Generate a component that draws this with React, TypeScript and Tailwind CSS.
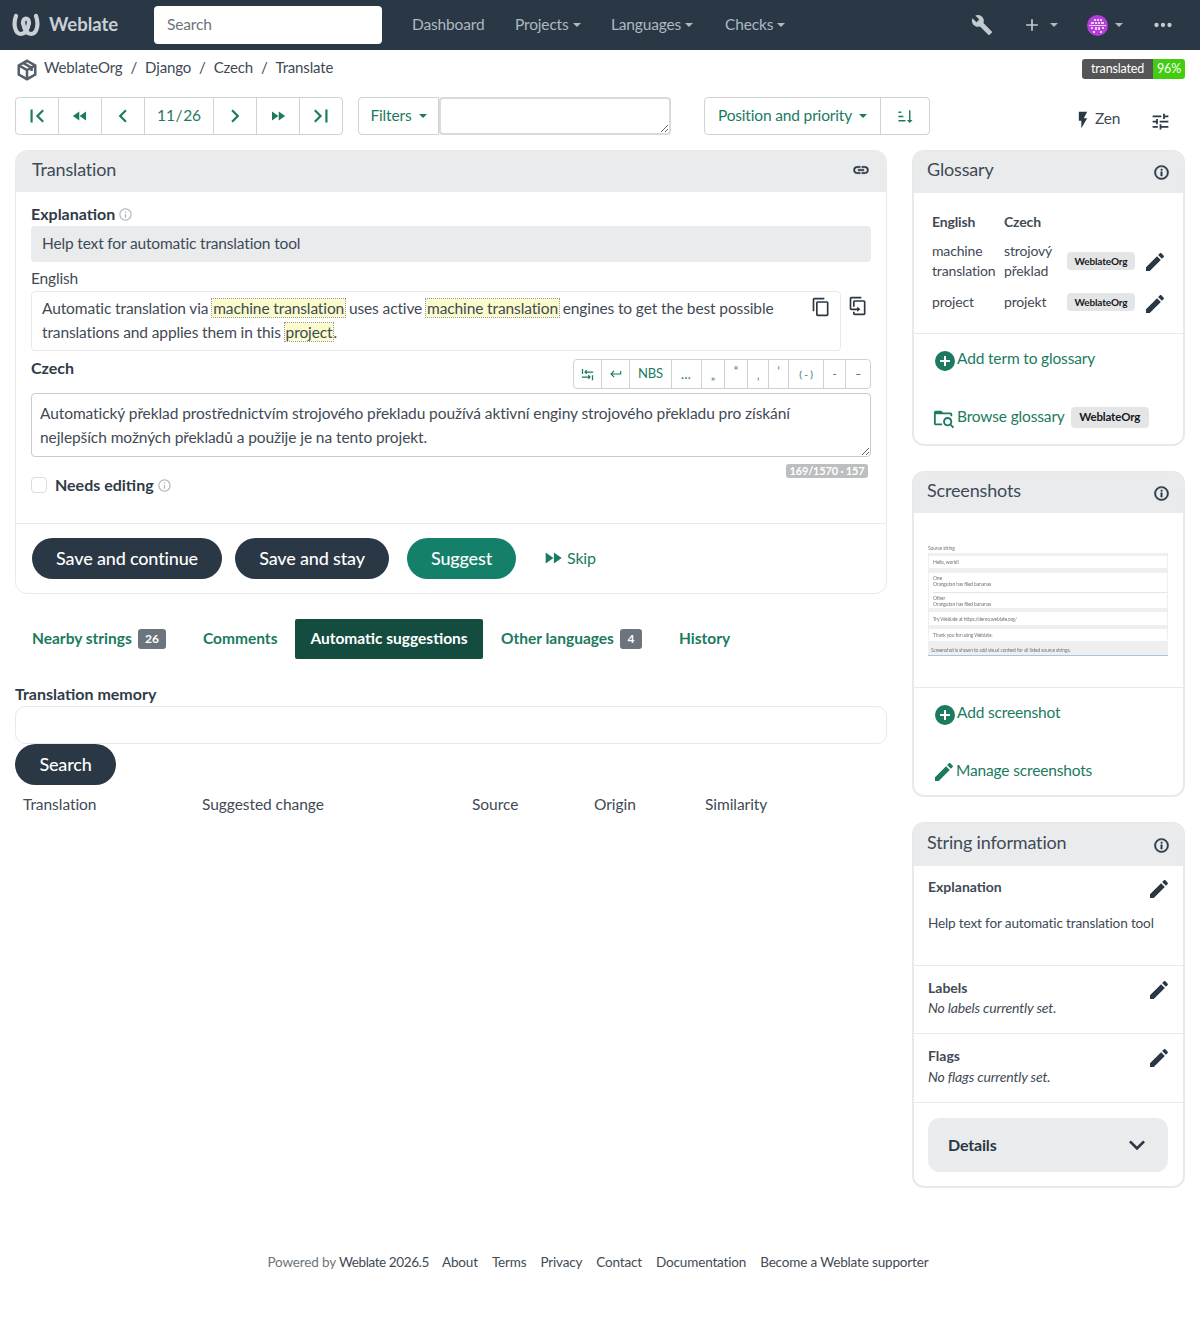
import type { ReactNode } from 'react';

const P = {
  pencil: 'M20.71,7.04C21.1,6.65 21.1,6 20.71,5.63L18.37,3.29C18,2.9 17.35,2.9 16.96,3.29L15.12,5.12L18.87,8.87M3,17.25V21H6.75L17.81,9.93L14.06,6.18L3,17.25Z',
  info: 'M11,9H13V7H11M12,20C7.59,20 4,16.41 4,12C4,7.59 7.59,4 12,4C16.41,4 20,7.59 20,12C20,16.41 16.41,20 12,20M12,2A10,10 0 0,0 2,12A10,10 0 0,0 12,22A10,10 0 0,0 22,12A10,10 0 0,0 12,2M11,17H13V11H11V17Z',
  plusCircle: 'M17,13H13V17H11V13H7V11H11V7H13V11H17M12,2A10,10 0 0,0 2,12A10,10 0 0,0 12,22A10,10 0 0,0 22,12A10,10 0 0,0 12,2Z',
  wrench: 'M22.7,19L13.6,9.9C14.5,7.6 14,4.9 12.1,3C10.1,1 7.1,0.6 4.7,1.7L9,6L6,9L1.6,4.7C0.4,7.1 0.9,10.1 2.9,12.1C4.8,14 7.5,14.5 9.8,13.6L18.9,22.7C19.3,23.1 19.9,23.1 20.3,22.7L22.6,20.4C23.1,20 23.1,19.3 22.7,19Z',
  copy: 'M19,21H8V7H19M19,5H8A2,2 0 0,0 6,7V21A2,2 0 0,0 8,23H19A2,2 0 0,0 21,21V7A2,2 0 0,0 19,5M16,1H4A2,2 0 0,0 2,3V17H4V3H16V1Z',
  duplicate: 'M11,17H4A2,2 0 0,1 2,15V3A2,2 0 0,1 4,1H16V3H4V15H11V13L15,16L11,19V17M19,21V7H8V13H6V7A2,2 0 0,1 8,5H19A2,2 0 0,1 21,7V21A2,2 0 0,1 19,23H8A2,2 0 0,1 6,21V19H8V21H19Z',
  first: 'M18.41,16.59L13.82,12L18.41,7.41L17,6L11,12L17,18L18.41,16.59M6,6H8V18H6V6Z',
  last: 'M5.59,7.41L10.18,12L5.59,16.59L7,18L13,12L7,6L5.59,7.41M16,6H18V18H16V6Z',
  left: 'M15.41,16.58L10.83,12L15.41,7.41L14,6L8,12L14,18L15.41,16.58Z',
  right: 'M8.59,16.58L13.17,12L8.59,7.41L10,6L16,12L10,18L8.59,16.58Z',
  rewind: 'M11.5,12L20,18V6M11,18V6L2.5,12L11,18Z',
  forward: 'M13,6V18L21.5,12M4,18L12.5,12L4,6V18Z',
  down: 'M7.41,8.58L12,13.17L16.59,8.58L18,10L12,16L6,10L7.41,8.58Z',
  plus: 'M19,13H13V19H11V13H5V11H11V5H13V11H19V13Z',
  dots: 'M16,12A2,2 0 0,1 18,10A2,2 0 0,1 20,12A2,2 0 0,1 18,14A2,2 0 0,1 16,12M10,12A2,2 0 0,1 12,10A2,2 0 0,1 14,12A2,2 0 0,1 12,14A2,2 0 0,1 10,12M4,12A2,2 0 0,1 6,10A2,2 0 0,1 8,12A2,2 0 0,1 6,14A2,2 0 0,1 4,12Z',
  flash: 'M7,2V13H10V22L17,10H13L17,2H7Z',
  tune: 'M3,17V19H9V17H3M3,5V7H13V5H3M13,21V19H21V17H13V15H11V21H13M7,9V11H3V13H7V15H9V9H7M21,13V11H11V13H21M15,9H17V7H21V5H17V3H15V9Z',
  link: 'M3.9,12C3.9,10.29 5.29,8.9 7,8.9H11V7H7A5,5 0 0,0 2,12A5,5 0 0,0 7,17H11V15.1H7C5.29,15.1 3.9,13.71 3.9,12M8,13H16V11H8V13M17,7H13V8.9H17C18.71,8.9 20.1,10.29 20.1,12C20.1,13.71 18.71,15.1 17,15.1H13V17H17A5,5 0 0,0 22,12A5,5 0 0,0 17,7Z',
  sort: 'M19 17H22L18 21L14 17H17V3H19M2 17H12V19H2M6 5V7H2V5M2 11H9V13H2V11Z',
  ret: 'M19,7V11H5.83L9.41,7.41L8,6L2,12L8,18L9.41,16.58L5.83,13H21V7H19Z',
  tabs: 'M3 3H5V11H3V3M7 7.500L10 4.500L11.400 5.900L10.300 7H21V9H10.300L11.400 10.100L10 11.500L7 8.500V7.500M19 13H21V21H19V13M17 16.500L14 19.500L12.600 18.100L13.700 17H3V15H13.700L12.600 13.900L14 12.500L17 15.500V16.500Z',
  folderSearch: 'M9 4H3C1.900 4 1 4.900 1 6V18C1 19.100 1.900 20 3 20H10V18H3V8H19V10H21V8C21 6.900 20.100 6 19 6H11L9 4ZM16 11C13.200 11 11 13.200 11 16C11 18.800 13.200 21 16 21C17 21 17.900 20.700 18.700 20.200L21.600 23.100L23 21.700L20.100 18.800C20.700 18 21 17 21 16C21 13.200 18.800 11 16 11ZM16 13C17.700 13 19 14.300 19 16C19 17.700 17.700 19 16 19C14.300 19 13 17.700 13 16C13 14.300 14.300 13 16 13Z',
};

function Icon({ d, className }: { d: string; className?: string }) {
  return (
    <svg viewBox="0 0 24 24" fill="currentColor" className={className}>
      <path d={d} />
    </svg>
  );
}

function Caret({ className }: { className?: string }) {
  return <span className={`inline-block w-0 h-0 border-x-[4px] border-x-transparent border-t-[4px] ${className ?? 'border-t-current'}`} />;
}

function NavItem({ label, caret, className }: { label: string; caret?: boolean; className: string }) {
  return (
    <span className={`flex items-center gap-[4px] text-[#aeb9c3] ${className}`}>
      {label}
      {caret && <Caret />}
    </span>
  );
}

function PagerButton({ w, children, last }: { w: string; children: ReactNode; last?: boolean }) {
  return (
    <span className={`flex items-center justify-center h-full text-[#1b7a60] ${w} ${last ? '' : 'border-r border-[#cfd2d5]'}`}>
      {children}
    </span>
  );
}

function CharButton({ w, label, last, className }: { w: string; label: ReactNode; last?: boolean; className?: string }) {
  return (
    <span className={`flex items-center justify-center h-full text-[#1b7a60] ${w} ${last ? '' : 'border-r border-[#cfd2d5]'} ${className ?? 'text-[13px]'}`}>
      {label}
    </span>
  );
}

function Panel({ title, h, className, children }: { title: string; h: string; className?: string; children: ReactNode }) {
  return (
    <section className={`rounded-[12px] border-2 border-[#e8e9eb] overflow-hidden bg-white ${className ?? ''}`}>
      <div className={`flex items-center justify-between bg-[#e9ebed] pl-[13px] pr-[13px] ${h}`}>
        <span className="text-[18px] text-[#3f4a55] pb-[6px]">{title}</span>
        <Icon d={P.info} className="w-[17px] h-[17px] text-[#2a3744] stroke-current stroke-[0.7]" />
      </div>
      {children}
    </section>
  );
}

function Hl({ children }: { children: ReactNode }) {
  return <span className="bg-[#fbfbcc] px-[1px] outline-1 outline-dotted outline-[#9a9a80]">{children}</span>;
}

function OrgTag({ big, className }: { big?: boolean; className?: string }) {
  return big ? (
    <span className="rounded-[4px] bg-[#e4e5e7] w-[78px] h-[21px] flex items-center justify-center text-[11.5px] font-bold text-[#16191c]">WeblateOrg</span>
  ) : (
    <span className={`rounded-[4px] bg-[#e4e5e7] h-[18px] w-[68px] flex items-center justify-center text-[10px] font-bold text-[#16191c] ${className ?? ''}`}>WeblateOrg</span>
  );
}

function Thumb() {
  return (
    <div className="w-[240px] h-[111px] text-[5px] leading-[6px] text-[#777] flex flex-col blur-[0.3px]">
      <div className="h-[8px]">Source string</div>
      <div className="flex-1 bg-[#efefef] border-b border-[#a9c4dc] pt-[3px] px-[1px] flex flex-col">
        <div className="h-[12px] bg-white pl-[4px] flex items-center">Hello, world!</div>
        <div className="h-[35px] mt-[5px] bg-white pl-[4px] flex flex-col justify-center gap-[5px]">
          <span>One<br />Orangutan has filed bananas</span>
          <span className="border-t border-[#e5e5e5] pt-[2px]">Other<br />Orangutan has filed bananas</span>
        </div>
        <div className="h-[13px] mt-[4px] bg-white pl-[4px] flex items-center">Try Weblate at https://demo.weblate.org/</div>
        <div className="h-[12px] mt-[4px] bg-white pl-[4px] flex items-center">Thank you for using Weblate.</div>
        <div className="pl-[2px] mt-[6px]">Screenshot is shown to add visual context for all listed source strings.</div>
      </div>
    </div>
  );
}

function InfoRow({ title, body, className, bodyClass }: { title: string; body: string; className: string; bodyClass: string }) {
  return (
    <div className={`border-b border-[#e8e9eb] pl-[14px] pr-[12px] ${className}`}>
      <div className="flex items-start justify-between">
        <span className="text-[14px] font-bold text-[#3f4a55] tracking-normal -mt-[1px]">{title}</span>
        <Icon d={P.pencil} className="w-[24px] h-[24px] text-[#2a3744]" />
      </div>
      <p className={`text-[#3f4a55] ${bodyClass}`}>{body}</p>
    </div>
  );
}

export default function App() {
  return (
    <div className="w-[1200px] h-[1321px] bg-white font-[Lato,sans-serif] text-[#3f4a55] text-[15.5px] tracking-[-0.16px] overflow-hidden">
      {/* Navbar */}
      <header className="h-[50px] bg-[#2a3744] flex items-center">
        <svg viewBox="0 0 28 24" className="ml-[12px] w-[28px] h-[24px]" fill="none" stroke="#c9d0d6" strokeWidth="4.200" strokeLinecap="round">
          <path d="M4 3C1 11 3 21 9 21C14 21 16 15 17 10" />
          <path d="M24 3C27 11 25 21 19 21C14 21 12 15 11 10" />
          <path d="M11 10C11 4 17 4 17 10" />
        </svg>
        <span className="ml-[9px] w-[105px] text-[18.5px] font-bold text-[#c9d0d6] tracking-normal">Weblate</span>
        <div className="w-[228px] h-[38px] bg-white rounded-[4px] flex items-center pl-[13px] text-[#6b747c] -mt-[1px]">Search</div>
        <NavItem label="Dashboard" className="ml-[30px] w-[103px]" />
        <NavItem label="Projects" caret className="w-[96px]" />
        <NavItem label="Languages" caret className="w-[114px]" />
        <NavItem label="Checks" caret className="w-[178px]" />
        <Icon d={P.wrench} className="w-[22px] h-[22px] text-[#c3cad0] ml-[68px]" />
        <Icon d={P.plus} className="w-[20px] h-[20px] text-[#c3cad0] ml-[29px]" />
        <Caret className="border-t-[#aeb9c3] ml-[8px]" />
        <svg viewBox="0 0 21 21" className="w-[21px] h-[21px] ml-[29px]">
          <circle cx="10.500" cy="10.500" r="10.500" fill="#b23fd9" />
          <path d="M7 4h2v2H7zM10 4h2v2h-2zM13 4h2v2h-2zM4 7h3v2H4zM8 7h2v2H8zM11 7h2v2h-2zM14 7h3v2h-3zM2 10h17v1H2zM4 12h2v2H4zM8 12h2v3H8zM11 12h2v3h-2zM15 12h2v2h-2zM6 16h2v2H6zM13 16h2v2h-2z" fill="#f3cdfb" />
        </svg>
        <Caret className="border-t-[#aeb9c3] ml-[7px]" />
        <Icon d={P.dots} className="w-[26px] h-[26px] text-[#c3cad0] ml-[27px]" />
      </header>

      {/* Breadcrumb */}
      <div className="h-[47px] flex items-start">
        <svg viewBox="0 0 24 24" className="w-[22px] h-[24px] ml-[16px] mt-[8px]" fill="none" stroke="#55606a" strokeWidth="2.800">
          <path d="M12 2L21 7V17L12 22L3 17V7Z" />
          <path d="M3 7L12 12L21 7M12 12V22M8 4.500L17 9.500V13" />
        </svg>
        <nav className="ml-[6px] mt-[7px] flex gap-[8px] text-[15px] text-[#3f4a55] leading-[20px]">
          <span>WeblateOrg</span><span>/</span><span>Django</span><span>/</span><span>Czech</span><span>/</span><span>Translate</span>
        </nav>
        <div className="ml-auto mr-[15px] mt-[9px] flex h-[20px] text-[12.5px] text-white rounded-[3px] overflow-hidden">
          <span className="bg-[#555] w-[71px] flex items-center justify-center">translated</span>
          <span className="bg-[#4c1] w-[32px] flex items-center justify-center">96%</span>
        </div>
      </div>

      {/* Toolbar */}
      <div className="h-[38px] flex items-stretch pl-[15px]">
        <div className="flex h-full w-[328px] rounded-[4px] border border-[#cfd2d5]">
          <PagerButton w="w-[43px]"><Icon d={P.first} className="w-[26px] h-[26px]" /></PagerButton>
          <PagerButton w="w-[43px]"><Icon d={P.rewind} className="w-[18px] h-[18px]" /></PagerButton>
          <PagerButton w="w-[43px]"><Icon d={P.left} className="w-[26px] h-[26px]" /></PagerButton>
          <PagerButton w="w-[69px]"><span className="[word-spacing:-3px] -mt-[1px]">11 / 26</span></PagerButton>
          <PagerButton w="w-[43px]"><Icon d={P.right} className="w-[26px] h-[26px]" /></PagerButton>
          <PagerButton w="w-[43px]"><Icon d={P.forward} className="w-[18px] h-[18px]" /></PagerButton>
          <PagerButton w="flex-1" last><Icon d={P.last} className="w-[26px] h-[26px]" /></PagerButton>
        </div>
        <div className="ml-[15px] w-[81px] rounded-l-[4px] border border-[#cfd2d5] flex items-center justify-center gap-[7px] text-[#1b7a60]">
          <span className="-mt-[1px]">Filters</span> <Caret />
        </div>
        <textarea className="w-[232px] h-[38px] rounded-[4px] border-2 border-[#d8dadc] outline-none" readOnly aria-label="Query" />
        <div className="ml-[33px] w-[226px] flex rounded-[4px] border border-[#cfd2d5] text-[#1b7a60]">
          <span className="w-[176px] border-r border-[#cfd2d5] flex items-center justify-center gap-[7px]"><span className="-mt-[1px]">Position and priority</span> <Caret /></span>
          <span className="flex-1 flex items-center justify-center"><Icon d={P.sort} className="w-[17px] h-[17px]" /></span>
        </div>
        <div className="ml-[143px] mt-[9px] flex items-start text-[#3f4a55]">
          <Icon d={P.flash} className="w-[20px] h-[20px] mt-[4px] text-[#2a3744]" />
          <span className="ml-[2px] mt-[1px]">Zen</span>
          <Icon d={P.tune} className="w-[21px] h-[21px] ml-[30px] mt-[5px] text-[#2a3744]" />
        </div>
      </div>

      {/* Main columns */}
      <div className="flex pl-[15px] pr-[15px] pt-[15px] gap-[25px]">
        <main className="w-[872px]">
          <section className="h-[444px] rounded-[12px] border border-[#e8e9eb] overflow-hidden">
            <div className="h-[41px] bg-[#e9ebed] flex items-center justify-between pl-[16px] pr-[16px]">
              <span className="text-[18px] text-[#3f4a55] pb-[4px]">Translation</span>
              <Icon d={P.link} className="w-[18px] h-[18px] text-[#2a3744] stroke-current stroke-[0.5] -mt-[4px]" />
            </div>
            <div className="px-[15px] pt-[12px]">
              <div className="flex items-center h-[20px] text-[16px] tracking-normal font-bold text-[#2f3b47]">
                Explanation
                <Icon d={P.info} className="w-[15px] h-[15px] ml-[3px] text-[#b4b8bc]" />
              </div>
              <div className="mt-[2px] h-[36px] bg-[#e9ebed] rounded-[4px] flex items-center pl-[11px] text-[#3f4a55]">Help text for automatic translation tool</div>
              <div className="mt-[5px] h-[22px] leading-[22px]">English</div>
              <div className="flex mt-[2px]">
                <div className="w-[810px] h-[60px] rounded-[4px] border border-[#e8e9eb] pl-[10px] pt-[4px] flex justify-between">
                  <p className="w-[750px] leading-[24px] tracking-[-0.12px]">
                    Automatic translation via <Hl>machine translation</Hl> uses active <Hl>machine translation</Hl> engines to get the best possible translations and applies them in this <Hl>project</Hl>.
                  </p>
                  <Icon d={P.copy} className="w-[20px] h-[20px] mr-[9px] mt-[1px] text-[#2a3744]" />
                </div>
                <Icon d={P.duplicate} className="w-[20px] h-[20px] ml-[7px] mt-[5px] text-[#2a3744]" />
              </div>
              <div className="flex justify-between items-start mt-[8px]">
                <span className="font-bold text-[16px] tracking-normal text-[#2f3b47] -mt-[3px]">Czech</span>
                <div className="flex h-[30px] rounded-[4px] border border-[#cfd2d5]">
                  <CharButton w="w-[28px]" label={<Icon d={P.tabs} className="w-[15px] h-[15px]" />} />
                  <CharButton w="w-[28px]" label={<Icon d={P.ret} className="w-[14px] h-[14px]" />} />
                  <CharButton w="w-[42px]" label="NBS" />
                  <CharButton w="w-[30px]" label="…" className="text-[13px] tracking-[1px] pt-[2px]" />
                  <CharButton w="w-[23px]" label="„" className="text-[11px] pt-[2px]" />
                  <CharButton w="w-[23px]" label="“" className="text-[11px] pb-[6px]" />
                  <CharButton w="w-[21px]" label="‚" className="text-[11px] pt-[2px]" />
                  <CharButton w="w-[20px]" label="‘" className="text-[11px] pb-[6px]" />
                  <CharButton w="w-[35px]" label="( - )" className="text-[10px] whitespace-pre" />
                  <CharButton w="w-[22px]" label="-" className="text-[11px]" />
                  <CharButton w="w-[24px]" label="–" className="text-[11px]" last />
                </div>
              </div>
              <textarea
                readOnly
                aria-label="Czech"
                className="block mt-[4px] w-[840px] h-[64px] rounded-[4px] border border-[#c9cbce] pl-[8px] pr-[40px] pt-[7px] leading-[24px] tracking-[-0.08px] outline-none text-[#3f4a55]"
                defaultValue="Automatický překlad prostřednictvím strojového překladu používá aktivní enginy strojového překladu pro získání nejlepších možných překladů a použije je na tento projekt."
              />
              <div className="flex justify-end pr-[3px] mt-[7px]">
                <span className="h-[14px] w-[82px] rounded-[3px] bg-[#bcbec0] text-white text-[11px] font-bold leading-[14px] text-center whitespace-nowrap">169/1570 · 157</span>
              </div>
              <div className="flex items-center -mt-[3px] h-[20px]">
                <span className="w-[16px] h-[16px] rounded-[4px] border border-[#d9dbdd]" />
                <span className="ml-[8px] font-bold text-[16px] tracking-normal text-[#2f3b47]">Needs editing</span>
                <Icon d={P.info} className="w-[15px] h-[15px] ml-[3px] text-[#b4b8bc]" />
              </div>
            </div>
            <div className="mt-[28px] border-t border-[#e8e9eb] pt-[14px] pl-[16px] flex items-center">
              <span className="h-[41px] w-[190px] rounded-full bg-[#2a3744] text-white text-[18px] font-medium flex items-center justify-center">Save and continue</span>
              <span className="ml-[13px] h-[41px] w-[154px] rounded-full bg-[#2a3744] text-white text-[18px] font-medium flex items-center justify-center">Save and stay</span>
              <span className="ml-[18px] h-[41px] w-[109px] rounded-full bg-[#15806a] text-white text-[18px] font-medium flex items-center justify-center">Suggest</span>
              <span className="ml-[26px] flex items-center text-[16px] text-[#1b7a60] -mt-[2px]">
                <Icon d={P.forward} className="w-[22px] h-[22px] mr-[3px] mt-[1px]" />
                Skip
              </span>
            </div>
          </section>

          {/* Tabs */}
          <div className="mt-[25px] h-[40px] flex items-center text-[15.5px] tracking-normal font-bold text-[#1b7a60] whitespace-nowrap">
            <span className="ml-[17px] w-[99px]">Nearby strings</span>
            <span className="ml-[7px] h-[20px] w-[28px] rounded-[3px] bg-[#6c757d] text-white text-[12px] flex items-center justify-center">26</span>
            <span className="ml-[37px] w-[74px]">Comments</span>
            <span className="ml-[18px] h-[40px] w-[188px] rounded-[2px] bg-[#144d3f] text-white flex items-center justify-center">Automatic suggestions</span>
            <span className="ml-[18px] w-[113px]">Other languages</span>
            <span className="ml-[6px] h-[20px] w-[22px] rounded-[3px] bg-[#6c757d] text-white text-[12px] flex items-center justify-center">4</span>
            <span className="ml-[37px]">History</span>
          </div>

          <div className="mt-[25px] h-[22px] leading-[20px] text-[16px] tracking-normal font-bold text-[#2f3b47]">Translation memory</div>
          <div className="h-[38px] rounded-[10px] border border-[#e8e9eb]" />
          <div className="h-[41px] w-[101px] rounded-full bg-[#2a3744] text-white text-[18px] font-medium flex items-center justify-center">Search</div>
          <div className="mt-[8px] pl-[8px] flex leading-[22px] tracking-[-0.05px]">
            <span className="w-[179px]">Translation</span>
            <span className="w-[270px]">Suggested change</span>
            <span className="w-[122px]">Source</span>
            <span className="w-[111px]">Origin</span>
            <span>Similarity</span>
          </div>
        </main>

        <aside className="w-[273px] flex flex-col gap-[25px] text-[#3f4a55]">
          <Panel title="Glossary" h="h-[41px]" className="h-[296px]">
            <div className="pl-[18px] pr-[14px] pt-[19px] h-[141px] border-b border-[#e8e9eb] text-[14px] leading-[20px]">
              <div className="flex font-bold h-[21px]">
                <span className="w-[72px]">English</span>
                <span>Czech</span>
              </div>
              <div className="flex items-center mt-[7px] h-[42px]">
                <span className="w-[72px]">machine translation</span>
                <span className="w-[63px]">strojový překlad</span>
                <OrgTag />
                <Icon d={P.pencil} className="w-[24px] h-[24px] text-[#2a3744] ml-[8px] mt-[2px]" />
              </div>
              <div className="flex items-center mt-[10px] h-[21px]">
                <span className="w-[72px] -mt-[2px]">project</span>
                <span className="w-[63px] -mt-[2px]">projekt</span>
                <OrgTag className="-mt-[2px]" />
                <Icon d={P.pencil} className="w-[24px] h-[24px] text-[#2a3744] ml-[8px] mt-[2px]" />
              </div>
            </div>
            <div className="pl-[20px] text-[#1b7a60]">
              <div className="h-[51px] flex items-center">
                <Icon d={P.plusCircle} className="w-[24px] h-[24px] -ml-[1px] mt-[3px]" />
                <span className="-mt-[1px]">Add term to glossary</span>
              </div>
              <div className="mt-[7px] h-[50px] flex items-center">
                <Icon d={P.folderSearch} className="w-[22px] h-[22px] -ml-[1px] mr-[2px] mt-[2px]" />
                <span className="-mt-[1px]">Browse glossary</span>
                <span className="ml-[6px]"><OrgTag big /></span>
              </div>
            </div>
          </Panel>

          <Panel title="Screenshots" h="h-[40px]" className="h-[326px]">
            <div className="h-[175px] border-b border-[#e8e9eb] pl-[14px] pt-[32px]"><Thumb /></div>
            <div className="pl-[20px] text-[#1b7a60]">
              <div className="h-[51px] flex items-center">
                <Icon d={P.plusCircle} className="w-[24px] h-[24px] -ml-[1px] mt-[3px]" />
                <span className="-mt-[1px]">Add screenshot</span>
              </div>
              <div className="mt-[7px] h-[50px] flex items-center">
                <Icon d={P.pencil} className="w-[24px] h-[24px] -ml-[2px] mt-[2px]" />
                <span>Manage screenshots</span>
              </div>
            </div>
          </Panel>

          <Panel title="String information" h="h-[42px]" className="h-[366px]">
            <InfoRow title="Explanation" body="Help text for automatic translation tool" className="h-[100px] pt-[11px]" bodyClass="text-[13.6px] mt-[12px]" />
            <InfoRow title="Labels" body="No labels currently set." className="h-[68px] pt-[12px]" bodyClass="text-[14px] italic -mt-[5px]" />
            <InfoRow title="Flags" body="No flags currently set." className="h-[69px] pt-[12px]" bodyClass="text-[14px] italic -mt-[4px]" />
            <div className="pl-[14px] pr-[15px] pt-[15px]">
              <div className="h-[54px] rounded-[12px] bg-[#e9ebed] flex items-center justify-between pl-[20px] pr-[15px] text-[16px] font-bold text-[#2a3744]">
                Details
                <Icon d={P.down} className="w-[32px] h-[32px] text-[#2a3744]" />
              </div>
            </div>
          </Panel>
        </aside>
      </div>

      {/* Footer */}
      <footer className="mt-[64px] pr-[4px] flex justify-center text-[13.5px] leading-[20px] text-[#3f4a55]">
        <span className="text-[#6b747c]">Powered by&nbsp;</span>
        <span className="w-[89px] whitespace-nowrap tracking-[-0.4px]">Weblate 2026.5</span>
        <span className="ml-[14px]">About</span>
        <span className="ml-[14px]">Terms</span>
        <span className="ml-[14px]">Privacy</span>
        <span className="ml-[14px]">Contact</span>
        <span className="ml-[14px]">Documentation</span>
        <span className="ml-[14px]">Become a Weblate supporter</span>
      </footer>
    </div>
  );
}
